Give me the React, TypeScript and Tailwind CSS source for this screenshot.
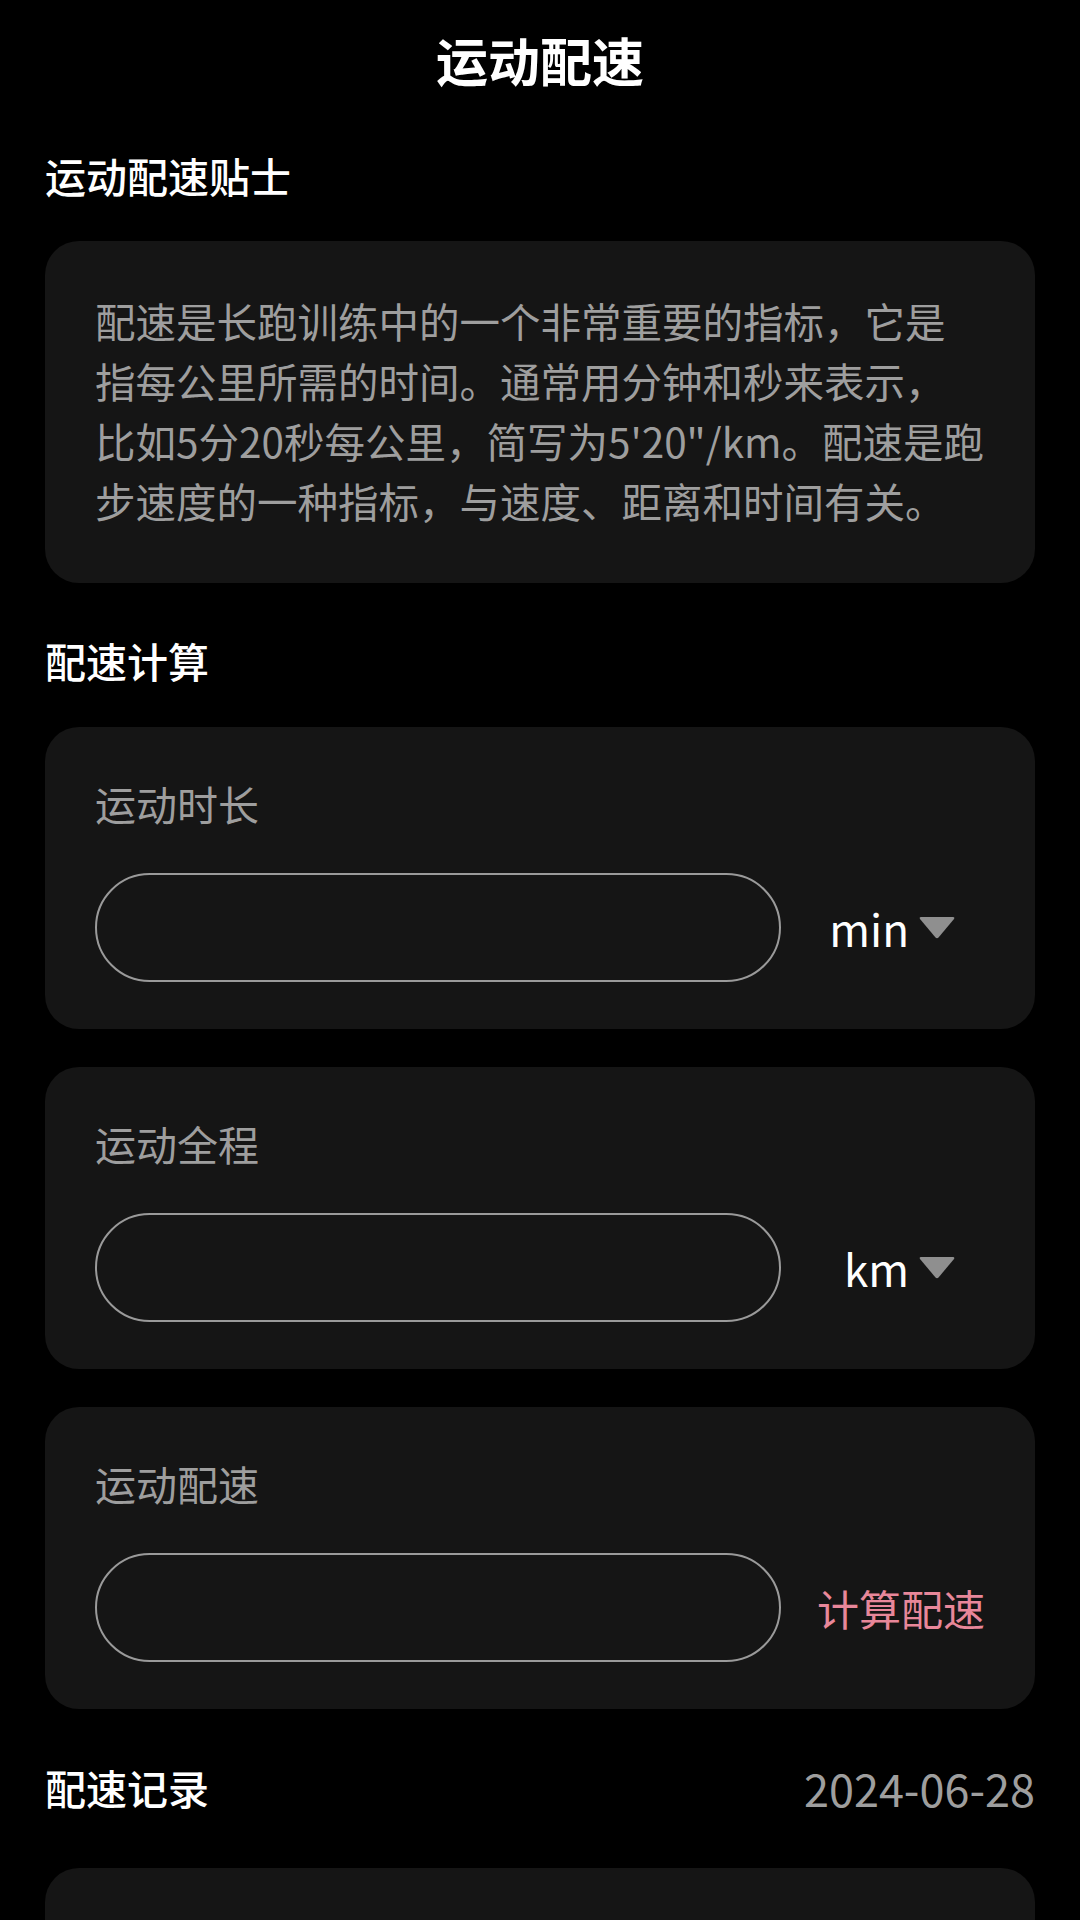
import { useState } from "react";

const cardClass = "rounded-[34px] bg-[#151515]";
const headingClass = "h-[56px] text-[41px] font-medium leading-[56px] text-white";

function Caret() {
  return (
    <svg width="36" height="23" viewBox="0 0 36 23" className="ml-[10px]" aria-hidden>
      <path d="M2 1 H34 Q36 1 35 3 L19.5 21.5 Q18 23 16.5 21.5 L1 3 Q0 1 2 1 Z" fill="#8f8f8f" />
    </svg>
  );
}

function FieldCard({
  label,
  value,
  onChange,
  trailing,
}: {
  label: string;
  value: string;
  onChange: (v: string) => void;
  trailing: React.ReactNode;
}) {
  return (
    <section className={`${cardClass} px-[50px] pb-[47px] pt-[48px]`}>
      <div className="h-[56px] text-[41px] leading-[56px] text-[#9e9e9e]">{label}</div>
      <div className="mt-[42px] flex items-center">
        <input
          type="text"
          value={value}
          onChange={(e) => onChange(e.target.value)}
          className="h-[109px] w-[686px] shrink-0 rounded-full border-2 border-[#9a9a9a] bg-transparent px-[40px] text-[41px] text-white outline-none"
        />
        <div className="flex flex-1 items-center justify-end">{trailing}</div>
      </div>
    </section>
  );
}

function UnitPicker({ unit }: { unit: string }) {
  return (
    <button type="button" className="flex items-center pr-[30px]">
      <span className="text-[44px] leading-none text-white">{unit}</span>
      <Caret />
    </button>
  );
}

export default function App() {
  const [duration, setDuration] = useState("");
  const [distance, setDistance] = useState("");
  const [pace, setPace] = useState("");

  const calculate = () => {
    const mins = parseFloat(duration);
    const km = parseFloat(distance);
    if (!mins || !km) return;
    const perKm = mins / km;
    const m = Math.floor(perKm);
    const s = Math.round((perKm - m) * 60);
    setPace(`${m}'${String(s).padStart(2, "0")}"/km`);
  };

  return (
    <div className="min-h-screen overflow-hidden bg-black px-[45px] font-['Noto_Sans_CJK_SC','Noto_Sans',sans-serif]">
      <header className="flex h-[120px] items-center justify-center text-[52px] font-bold text-white">
        运动配速
      </header>

      <h2 className={`${headingClass} mt-[27px]`}>运动配速贴士</h2>
      <section className={`${cardClass} mt-[38px] px-[50px] pb-[52px] pt-[50px]`}>
        <p className="whitespace-nowrap text-[40.5px] leading-[60px] text-[#9e9e9e]">
          配速是长跑训练中的一个非常重要的指标，它是
          <br />
          指每公里所需的时间。通常用分钟和秒来表示，
          <br />
          比如5分20秒每公里，简写为5'20"/km。配速是跑
          <br />
          步速度的一种指标，与速度、距离和时间有关。
        </p>
      </section>

      <h2 className={`${headingClass} mt-[49px]`}>配速计算</h2>
      <div className="mt-[39px] flex flex-col gap-[38px]">
        <FieldCard label="运动时长" value={duration} onChange={setDuration} trailing={<UnitPicker unit="min" />} />
        <FieldCard label="运动全程" value={distance} onChange={setDistance} trailing={<UnitPicker unit="km" />} />
        <FieldCard
          label="运动配速"
          value={pace}
          onChange={setPace}
          trailing={
            <button type="button" onClick={calculate} className="text-[42px] leading-none text-[#e8879a]">
              计算配速
            </button>
          }
        />
      </div>

      <div className="mt-[50px] flex h-[56px] items-center justify-between">
        <h2 className="text-[41px] font-medium leading-[56px] text-white">配速记录</h2>
        <span className="text-[45px] leading-none text-[#9e9e9e]">2024-06-28</span>
      </div>
      {/* records list; only its top edge is on screen */}
      <section className="mt-[53px] h-[54px] rounded-t-[34px] bg-[#151515]" />
    </div>
  );
}
